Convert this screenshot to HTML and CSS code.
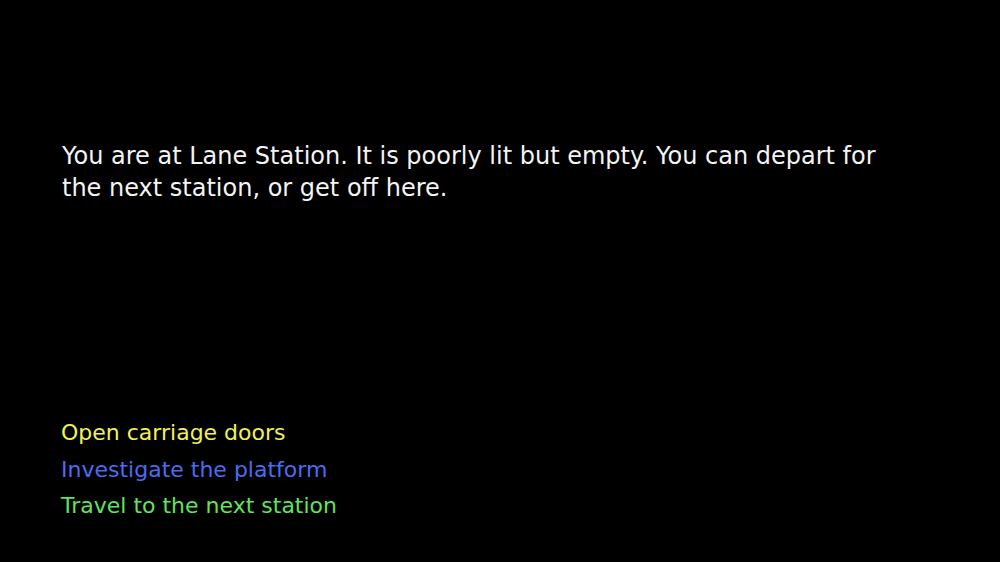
FILE: index.html
```html
<!DOCTYPE html>
<html lang="en">
<head>
<meta charset="utf-8">
<title>Lane Station</title>
<link rel="stylesheet" href="styles.css">
</head>
<body>
<main class="screen">
  <p class="narrative">You are at Lane Station. It is poorly lit but empty. You can depart for the next station, or get off here.</p>
  <ul class="choices">
    <li class="choice choice-yellow">Open carriage doors</li>
    <li class="choice choice-blue">Investigate the platform</li>
    <li class="choice choice-green">Travel to the next station</li>
  </ul>
</main>
</body>
</html>
```
FILE: styles.css
```css
html, body {
  margin: 0;
  padding: 0;
  background: #000;
}
body {
  width: 1000px;
  height: 562px;
  overflow: hidden;
  font-family: "DejaVu Sans", Verdana, sans-serif;
  font-size: 24px;
}
.screen {
  display: flex;
  flex-direction: column;
  height: 562px;
  box-sizing: border-box;
  padding: 140px 0 0 62px;
}
.narrative {
  margin: 0;
  width: 850px;
  color: #f4f4f4;
  line-height: 32px;
}
.choices {
  list-style: none;
  margin: 211px 0 0 -1px;
  padding: 0;
  display: flex;
  flex-direction: column;
  font-size: 22px;
}
.choice {
  line-height: 36.5px;
}
.choice-yellow { color: #eef25a; }
.choice-blue { color: #4a6cf0; }
.choice-green { color: #5ee45e; }
```
